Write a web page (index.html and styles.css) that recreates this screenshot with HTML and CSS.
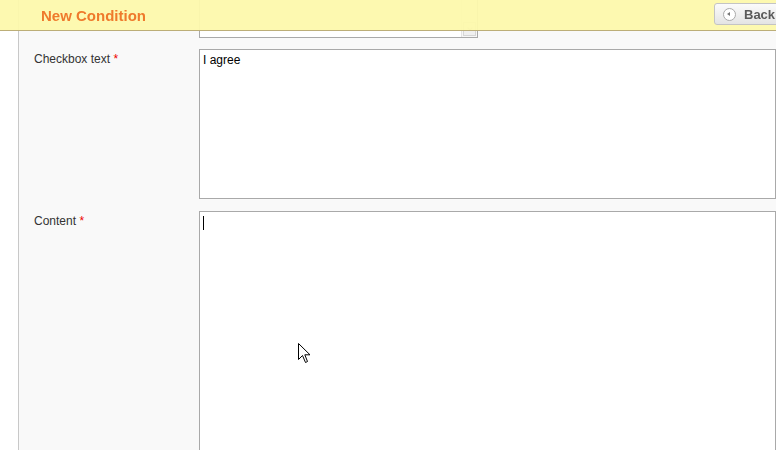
FILE: index.html
```html
<!DOCTYPE html>
<html lang="en">
<head>
    <meta charset="UTF-8">
    <title>New Condition</title>
    <link rel="stylesheet" href="styles.css">
</head>
<body>
    <div class="header">
        <h1>New Condition</h1>
        <button class="back-btn" type="button">
            <span class="back-icon"></span>
            Back
        </button>
    </div>

    <div class="main">
        <div class="form">
            <div class="form-row first-row">
                <div class="label"></div>
                <div class="field small-field">
                    <div class="scrollbar"><span class="scroll-down"></span></div>
                </div>
            </div>
            <div class="form-row">
                <div class="label">Checkbox text <span class="required">*</span></div>
                <div class="field text-field">I agree</div>
            </div>
            <div class="form-row last-row">
                <div class="label">Content <span class="required">*</span></div>
                <div class="field content-field"><span class="caret"></span></div>
            </div>
        </div>
    </div>

    <svg class="pointer" width="13" height="21" viewBox="0 0 13 21">
        <path d="M0.5 0.5 L0.5 16.5 L4.5 12.5 L7.5 19.5 L9.5 18.5 L6.8 11.8 L12 11.8 Z" fill="#fff" stroke="#000" stroke-width="1"/>
    </svg>
</body>
</html>
```

FILE: styles.css
```css
body {
    margin: 0;
    font-family: "Liberation Sans", Arial, sans-serif;
    font-size: 12px;
    color: #333;
    background: #fff;
    overflow: hidden;
}
.header {
    position: fixed;
    top: 0;
    left: 0;
    right: 0;
    height: 30px;
    background: rgba(253, 249, 172, 0.95);
    border-bottom: 1px solid #bcae78;
    z-index: 10;
    display: flex;
    align-items: center;
    justify-content: space-between;
}
.header h1 {
    margin: 0 0 0 41px;
    font-size: 15px;
    font-weight: bold;
    color: #ef7a2c;
}
.back-btn {
    align-self: flex-start;
    margin-top: 3px;
    margin-right: -12px;
    height: 22px;
    width: 74px;
    padding: 0 0 0 8px;
    display: flex;
    align-items: center;
    gap: 8px;
    border: 1px solid #c4c4c4;
    border-radius: 3px;
    background: linear-gradient(#fbfbfb, #e4e4e4);
    font-family: "Liberation Sans", Arial, sans-serif;
    font-size: 13px;
    font-weight: bold;
    color: #5a5a5a;
}
.back-icon {
    position: relative;
    width: 11px;
    height: 11px;
    border: 1px solid #aaa;
    border-radius: 50%;
    background: #fff;
}
.back-icon::after {
    content: "";
    position: absolute;
    left: 3px;
    top: 3px;
    border-top: 2.5px solid transparent;
    border-bottom: 2.5px solid transparent;
    border-right: 3px solid #777;
}
.main {
    padding-left: 18px;
    margin-top: -20px;
}
.form {
    border-left: 1px solid #c8c8c8;
    background: #f9f9f9;
}
.form-row {
    display: flex;
    margin-bottom: 11px;
}
.form-row + .form-row {
    margin-bottom: 12px;
}
.form-row.last-row {
    margin-bottom: 0;
}
.label {
    width: 165px;
    flex-shrink: 0;
    padding: 3px 0 0 15px;
    line-height: 14px;
    color: #333;
}
.required {
    color: #e00;
}
.field {
    position: relative;
    box-sizing: border-box;
    background: #fff;
    border: 1px solid #a9a9a9;
    padding: 3px 3px;
    line-height: 14px;
    color: #000;
}
.small-field {
    width: 279px;
    height: 58px;
}
.scrollbar {
    position: absolute;
    top: 0;
    right: 0;
    bottom: 0;
    width: 15px;
    border-left: 1px solid #e4e4e4;
    background: #f7f7f7;
}
.scroll-down {
    position: absolute;
    left: 1px;
    right: 1px;
    bottom: 1px;
    height: 14px;
    border: 1px solid #d6d6d6;
    box-sizing: border-box;
    background: #f0f0f0;
}
.scroll-down::after {
    content: "";
    position: absolute;
    left: 4px;
    top: 3px;
    width: 3px;
    height: 3px;
    border-right: 1px solid #c4c4c4;
    border-bottom: 1px solid #c4c4c4;
    transform: rotate(45deg);
}
.text-field {
    width: 577px;
    height: 150px;
}
.content-field {
    width: 577px;
    height: 240px;
}
.caret {
    position: absolute;
    left: 3px;
    top: 4px;
    width: 1px;
    height: 14px;
    background: #000;
}
.pointer {
    position: absolute;
    left: 298px;
    top: 343px;
}
```
